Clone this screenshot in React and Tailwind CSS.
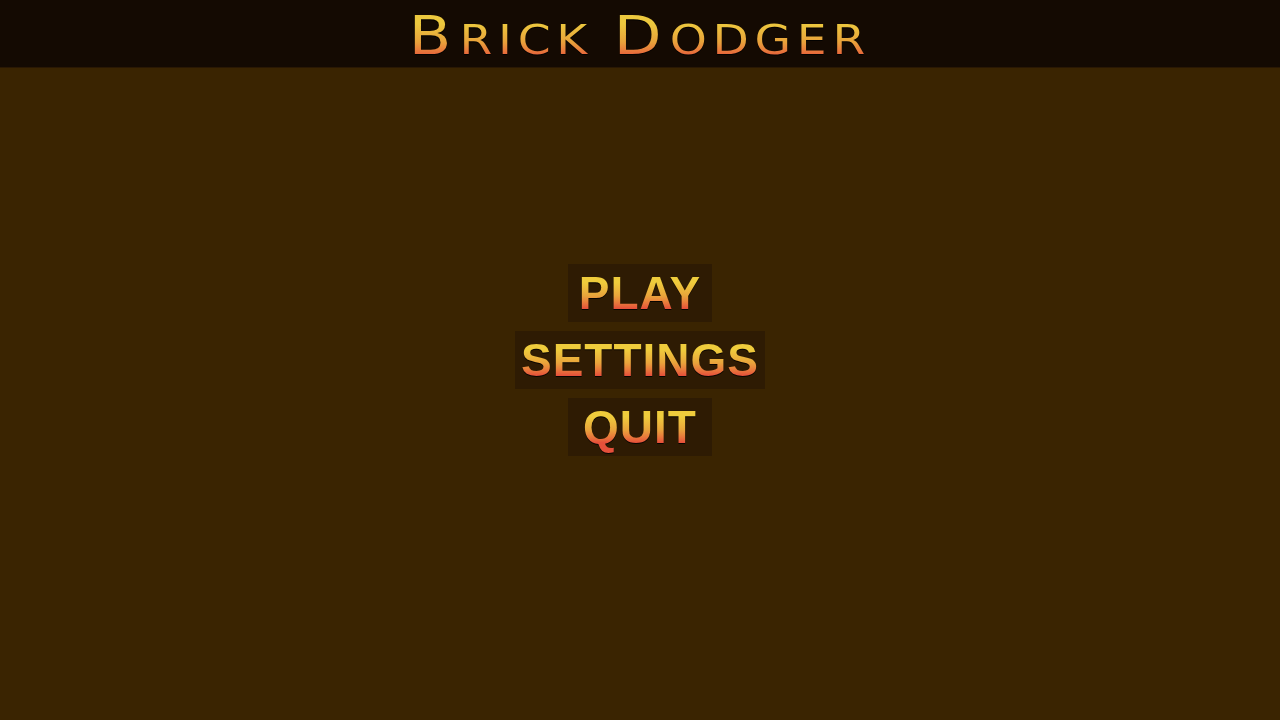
const menuItems = ['PLAY', 'SETTINGS', 'QUIT'];

export default function App() {
  return (
    <div className="flex h-[720px] w-[1280px] flex-col overflow-hidden bg-[#3a2401]">
      <header className="flex h-[68px] shrink-0 items-start justify-center border-b border-[#2a1803] bg-[#140a02] pt-[5px]">
        <h1
          className="h-[62px] scale-x-[1.15] bg-gradient-to-b from-[#ecc83e] from-30% via-[#e8a13a] via-60% to-[#e4483a] to-88% bg-clip-text text-transparent drop-shadow-[0_1px_0_rgba(0,0,0,0.9)]"
          style={{ fontFamily: '"DejaVu Sans", Verdana, sans-serif' }}
        >
          <span className="text-[54px] leading-[62px] tracking-[7px]">B</span>
          <span className="text-[41px] leading-[62px] tracking-[5px]">RICK </span>
          <span className="text-[54px] leading-[62px] tracking-[7px]">D</span>
          <span className="text-[41px] leading-[62px] tracking-[5px]">ODGER</span>
        </h1>
      </header>

      <main className="flex flex-1 flex-col items-center gap-[9px] pt-[196px]">
        {menuItems.map((item) => (
          <MenuButton key={item} label={item} />
        ))}
      </main>
    </div>
  );
}

function MenuButton({ label }) {
  return (
    <button
      type="button"
      className="flex h-[58px] min-w-[144px] items-center justify-center bg-[#2e1b03] px-[6px]"
    >
      <span
        className="bg-gradient-to-b from-[#efcc3c] from-30% via-[#e9a53b] via-55% to-[#e5503a] to-80% bg-clip-text text-[46px] font-bold leading-[52px] tracking-[1px] text-transparent drop-shadow-[0_1px_0_rgba(0,0,0,0.85)]"
        style={{ fontFamily: '"Liberation Sans", Arial, sans-serif' }}
      >
        {label}
      </span>
    </button>
  );
}
